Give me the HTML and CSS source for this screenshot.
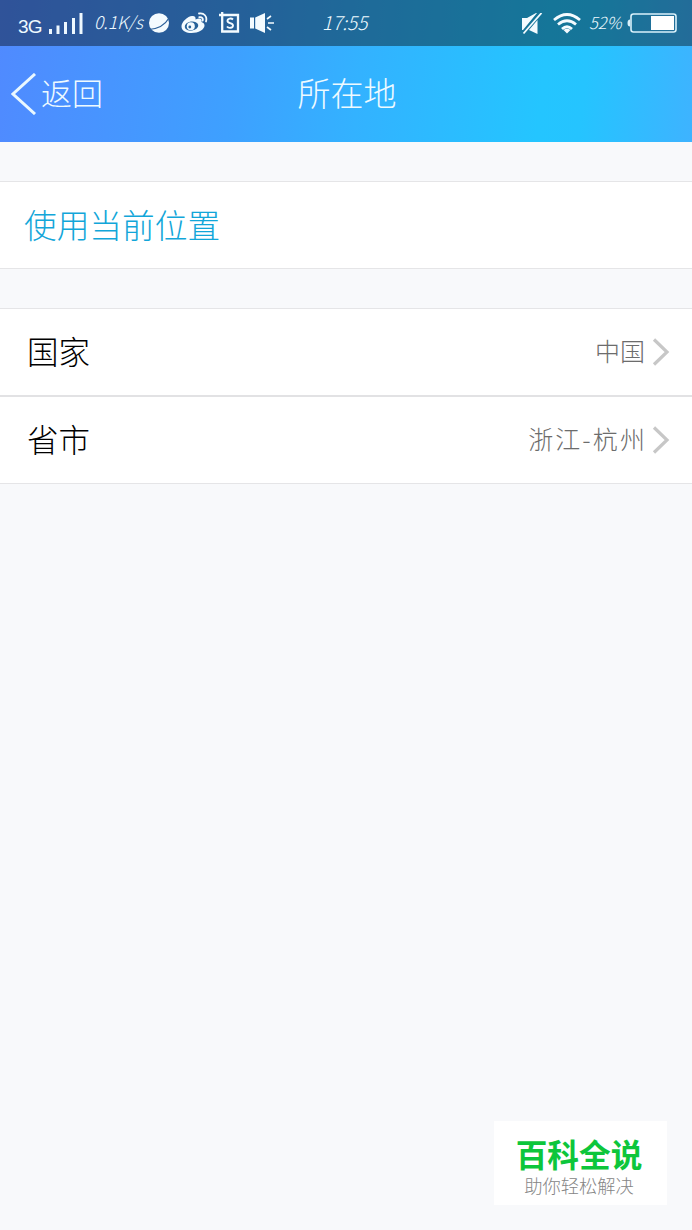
FILE: index.html
```html
<!DOCTYPE html>
<html lang="zh-CN">
<head>
<meta charset="utf-8">
<title>所在地</title>
<link rel="stylesheet" href="styles.css">
</head>
<body>
<div class="top">
  <div class="status">
    <span class="network">3G</span>
    <svg class="signal" width="36" height="22" viewBox="0 0 36 22" fill="#eef8ff"><path d="M1 16h3v5H1zM8.500 12.500h3V21h-3zM16 9h3v12h-3zM24 5h3v16h-3zM31.500 0h3v21h-3z"/></svg>
    <span class="speed">0.1K/s</span>
    <svg class="planet" width="22" height="22" viewBox="0 0 22 22"><ellipse cx="11" cy="11" rx="10" ry="9.800" fill="#f4fbff"/><path d="M1 17.500Q15 16.500 21 6" fill="none" stroke="#2a5f99" stroke-width="1.200"/></svg>
    <svg class="weibo" width="27" height="22" viewBox="0 0 27 22" fill="none"><path d="M11 4C7 4 0 10 .5 15c.5 4 5 6 10 6 7 0 13-3.500 13-7.500 0-2.500-2-3-3-3.500.8-3-1-4.500-6-2.500C15 5 13.500 3.500 11 4Z" fill="#f4fbff"/><ellipse cx="10.500" cy="14" rx="6.800" ry="4.600" transform="rotate(-8 11 14)" fill="#27639a"/><circle cx="9.800" cy="14.300" r="4" fill="#f4fbff"/><circle cx="8.800" cy="15" r="1.400" fill="#27639a"/><path d="M18 1.500c5-1 8.500 3 7 8M18.300 5.200c2.500-.5 4 1.200 3.400 3.400" stroke="#f4fbff" stroke-width="1.800" stroke-linecap="round"/></svg>
    <svg class="shot" width="22" height="22" viewBox="0 0 22 22" fill="none" stroke="#f4fbff"><path d="M0 3H19V19.500H3.200V0" stroke-width="2.300"/><path d="M14 7.500C12.500 6 8.500 6.200 8.500 9c0 2.700 5.500 1.500 5.500 4.500 0 2.800-4.500 3-6 1" stroke-width="1.900"/></svg>
    <svg class="speaker" width="24" height="20" viewBox="0 0 24 20" fill="#f4fbff"><path d="M0 4.500h4v11H0zM5.200 4.500L15 0v20l-9.800-4.500z"/><path d="M17 6l4-3M18 10h6M17 14l4 3" fill="none" stroke="#f4fbff" stroke-width="1.600"/></svg>
    <span class="clock">17:55</span>
    <svg class="mute" width="22" height="22" viewBox="0 0 22 22"><path d="M1 5h5L15 0h1L2 17H1zM8 17L16.500 7v14z" fill="#f4fbff"/><path d="M2.500 20.500L20.500 0" stroke="#f4fbff" stroke-width="1.800"/></svg>
    <svg class="wifi" width="28" height="21" viewBox="0 0 28 21" fill="none" stroke="#f4fbff" stroke-width="2.800"><path d="M1 7Q14-4 27 7M5 11.500Q14 4 23 11.500M9 16Q14 11.500 19 16"/><path d="M10.500 17Q14 14.500 17.500 17L14 20.500Z" fill="#f4fbff" stroke="none"/></svg>
    <span class="percent">52%</span>
    <svg class="battery" width="50" height="20" viewBox="0 0 50 20"><rect x="4" y="1" width="45" height="18" rx="2.500" fill="none" stroke="#d9f1fb" stroke-width="1.600"/><path d="M3 6.500Q.5 6.500.5 10t2.500 3.500z" fill="#d9f1fb"/><path d="M24 3h23v14H24z" fill="#fff"/></svg>
  </div>
  <div class="nav">
    <div class="back">
      <svg width="26" height="42" viewBox="0 0 26 42" fill="none" stroke="#eaf8ff" stroke-width="3"><path d="M24 1L2 21L24 41"/></svg>
      <span class="back-text">返回</span>
    </div>
    <h1 class="title">所在地</h1>
    <div class="nav-end"></div>
  </div>
</div>
<div class="group">
  <div class="row locate">使用当前位置</div>
</div>
<div class="group">
  <div class="row country">
    <span class="label">国家</span><span class="value">中国</span>
    <svg class="chevron" width="18" height="28" viewBox="0 0 18 28"><path d="M2 1.500L15 14L2 26.500"/></svg>
  </div>
  <div class="row">
    <span class="label">省市</span><span class="value city">浙江-杭州</span>
    <svg class="chevron" width="18" height="28" viewBox="0 0 18 28"><path d="M2 1.500L15 14L2 26.500"/></svg>
  </div>
</div>
<div class="brand">
  <div class="brand-name">百科全说</div>
  <div class="brand-note">助你轻松解决</div>
</div>
</body>
</html>
```
FILE: styles.css
```css
* { box-sizing: border-box; }
body {
  margin: 0;
  height: 1230px;
  display: flex;
  flex-direction: column;
  background: #f8f9fb;
  font-family: "Noto Sans CJK SC", sans-serif;
  font-weight: 300;
}
svg { flex: none; display: block; }
.top {
  height: 142px;
  color: #eefaff;
  background: linear-gradient(96deg, #508aff 0%, #3ea0ff 34%, #33b2ff 52%, #24c5ff 78%, #25c4ff 84%, #3eb3ff 100%);
}
.status {
  height: 46px;
  display: flex;
  align-items: center;
  background: rgba(0, 0, 0, .4);
  white-space: nowrap;
}
.network { width: 24px; margin: 7px 0 0 18px; font: 400 19px "Liberation Sans", sans-serif; letter-spacing: -.8px; }
.signal { margin: 2px 0 0 6px; }
.speed, .clock, .percent { flex: none; padding-bottom: 2px; font-style: italic; line-height: 44px; }
.speed { width: 54px; margin-left: 10px; font-size: 17.5px; }
.planet { margin-left: 0; }
.weibo { margin-left: 11px; }
.shot { margin-left: 11px; }
.speaker { margin-left: 9px; }
.clock { width: 48px; margin-left: 48px; font-size: 19px; }
.mute { margin: 1px 0 0 151px; }
.wifi { margin-left: 10px; }
.percent { width: 37px; margin-left: 8px; font-size: 16.5px; }
.battery { margin-left: 1px; }
.nav {
  height: 96px;
  display: grid;
  grid-template-columns: 1fr auto 1fr;
  align-items: center;
}
.back { display: flex; align-items: center; gap: 4px; padding-left: 11px; font-size: 31px; line-height: 40px; }
.back-text { padding-bottom: 4px; }
.title { margin: 0 0 4px 2px; font-size: 33px; font-weight: 300; line-height: 40px; }
.group {
  margin-top: 39px;
  background: #fff;
  border-top: 1px solid #e5e5e7;
  border-bottom: 1px solid #e5e5e7;
}
.row {
  height: 86px;
  padding: 0 22px 0 27px;
  display: flex;
  align-items: center;
  font-size: 31.5px;
}
.row.locate { padding: 0 0 4px 24px; color: #12a6d9; font-size: 32.700px; }
.row.country { height: 88px; border-bottom: 2px solid #e2e2e4; }
.label { padding-bottom: 4px; color: #000; }
.value { margin-left: auto; padding-bottom: 4px; color: #6c6c6c; font-size: 25px; }
.city { letter-spacing: 2.100px; margin-right: -2px; }
.chevron { margin-left: 7px; fill: none; stroke: #c7c7c7; stroke-width: 3.2; }
.brand {
  width: 173px;
  height: 84px;
  margin: auto 25px 25px auto;
  padding-top: 15px;
  background: #fff;
  text-align: center;
}
.brand-name { padding-right: 3px; color: #0dc63b; font-size: 31.700px; line-height: 35px; font-weight: 700; }
.brand-note { padding-right: 3px; color: #858585; font-size: 18.3px; line-height: 28px; font-weight: 300; }
```
